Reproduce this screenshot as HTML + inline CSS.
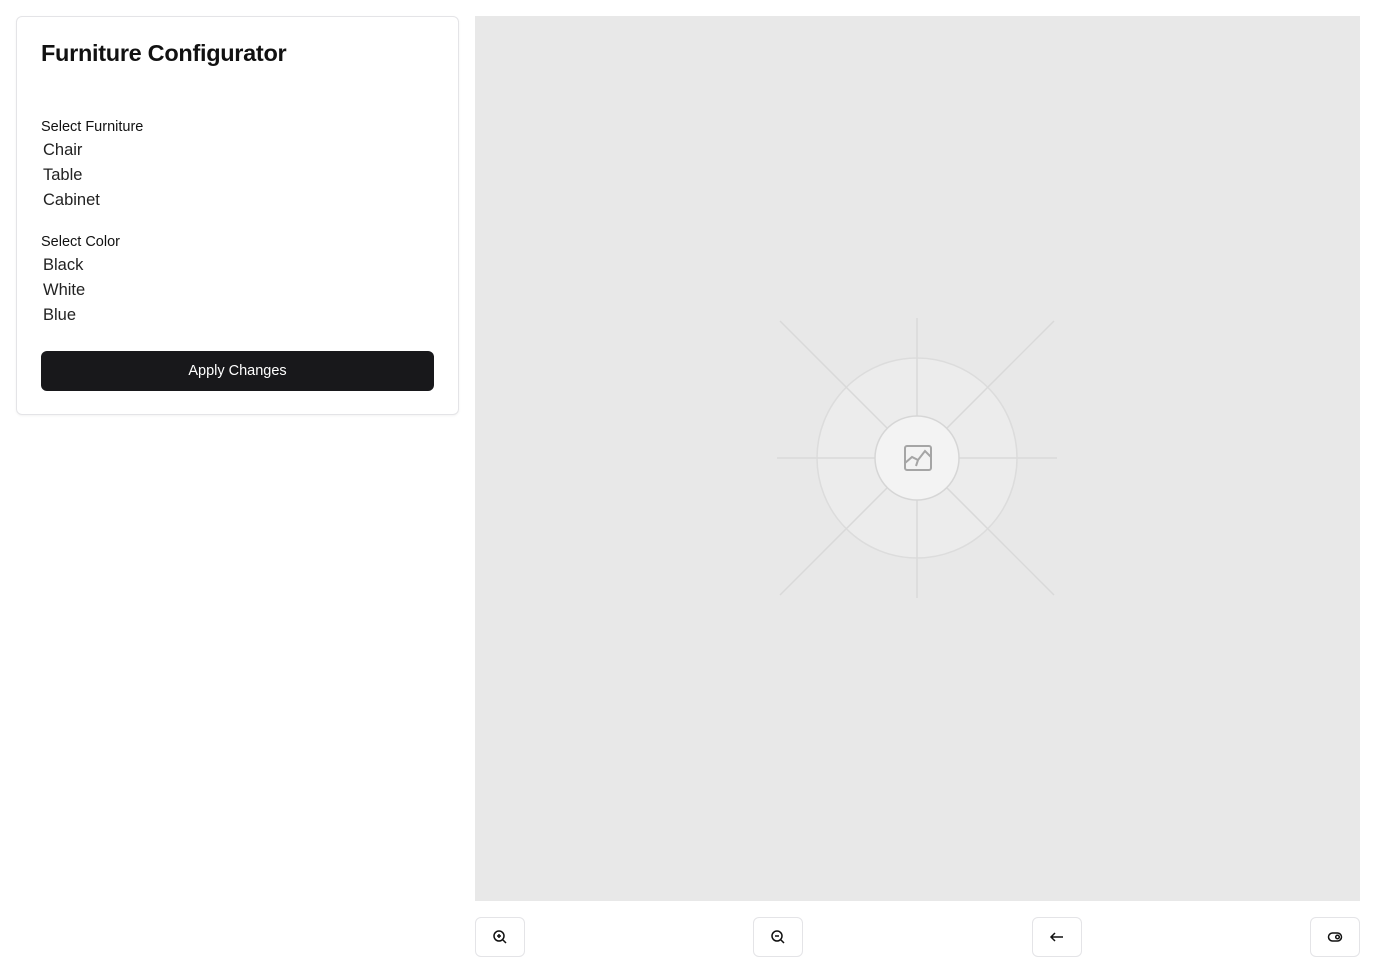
<!DOCTYPE html>
<html><head><style>
body{margin:0;background:#fff;font-family:"Liberation Sans",sans-serif;color:#111;}
.card{position:absolute;left:16px;top:16px;width:443px;height:399px;border:1px solid #e4e4e7;border-radius:6px;box-sizing:border-box;box-shadow:0 1px 2px rgba(0,0,0,.05)}
h1{position:absolute;left:24px;top:23px;margin:0;font-size:23.5px;font-weight:bold;letter-spacing:-0.3px;color:#111}
.lbl{position:absolute;left:24px;font-size:14.5px;color:#111}
.opt{position:absolute;left:26px;font-size:16.5px;color:#222}
.btn{position:absolute;left:24px;top:334px;width:393px;height:40px;background:#18181b;border-radius:6px;color:#fff;font-size:14.5px;text-align:center;line-height:41px}
.img{position:absolute;left:475px;top:16px;width:885px;height:885px;background:#e8e8e8}
.ib{position:absolute;top:917px;width:50px;height:40px;border:1px solid #e4e4e7;border-radius:6px;box-sizing:border-box;display:flex;align-items:center;justify-content:center}
</style></head><body>
<div class="card">
<h1>Furniture Configurator</h1>
<div class="lbl" style="top:102px">Select Furniture</div>
<div class="opt" style="top:124px">Chair</div>
<div class="opt" style="top:149px">Table</div>
<div class="opt" style="top:174px">Cabinet</div>
<div class="lbl" style="top:217px">Select Color</div>
<div class="opt" style="top:239px">Black</div>
<div class="opt" style="top:264px">White</div>
<div class="opt" style="top:289px">Blue</div>
<div class="btn">Apply Changes</div>
</div>
<div class="img">
<svg width="885" height="885" viewBox="475 16 885 885">
<g stroke="#d9d9d9" stroke-width="1.5" fill="none">
<line x1="917" y1="318" x2="917" y2="598"/><line x1="777" y1="458" x2="1057" y2="458"/>
<line x1="780" y1="321" x2="1054" y2="595"/><line x1="1054" y1="321" x2="780" y2="595"/>
</g>
<circle cx="917" cy="458" r="100" fill="#ececec" fill-opacity=".8" stroke="#dcdcdc" stroke-width="1.5"/>
<g stroke="#d9d9d9" stroke-width="1.5"><line x1="917" y1="358" x2="917" y2="558"/><line x1="817" y1="458" x2="1017" y2="458"/><line x1="846" y1="387" x2="988" y2="529"/><line x1="988" y1="387" x2="846" y2="529"/></g>
<circle cx="917" cy="458" r="42" fill="#f3f3f3" stroke="#d6d6d6" stroke-width="1.5"/>
<rect x="905" y="446" width="26" height="24" rx="2" fill="none" stroke="#a5a5a5" stroke-width="2"/>
<path d="M905 463 L912 457 L918 460 L925 451 L931 457 M918 460 L916 466" fill="none" stroke="#a5a5a5" stroke-width="2"/>
</svg>
</div>
<div class="ib" style="left:475px"><svg width="16" height="16" viewBox="0 0 16 16" fill="none" stroke="#111" stroke-width="1.5"><circle cx="7" cy="7" r="5"/><path d="M11 11l3 3M7 5v4M5 7h4"/></svg></div>
<div class="ib" style="left:753px"><svg width="16" height="16" viewBox="0 0 16 16" fill="none" stroke="#111" stroke-width="1.5"><circle cx="7" cy="7" r="5"/><path d="M11 11l3 3M5 7h4"/></svg></div>
<div class="ib" style="left:1032px"><svg width="16" height="16" viewBox="0 0 16 16" fill="none" stroke="#111" stroke-width="1.5"><path d="M14 8H2M6 4L2 8l4 4"/></svg></div>
<div class="ib" style="left:1310px"><svg width="16" height="16" viewBox="0 0 16 16" fill="none" stroke="#111" stroke-width="1.5"><rect x="1.5" y="4" width="13" height="8" rx="4"/><circle cx="10.5" cy="8" r="1.8"/></svg></div>
</body></html>
